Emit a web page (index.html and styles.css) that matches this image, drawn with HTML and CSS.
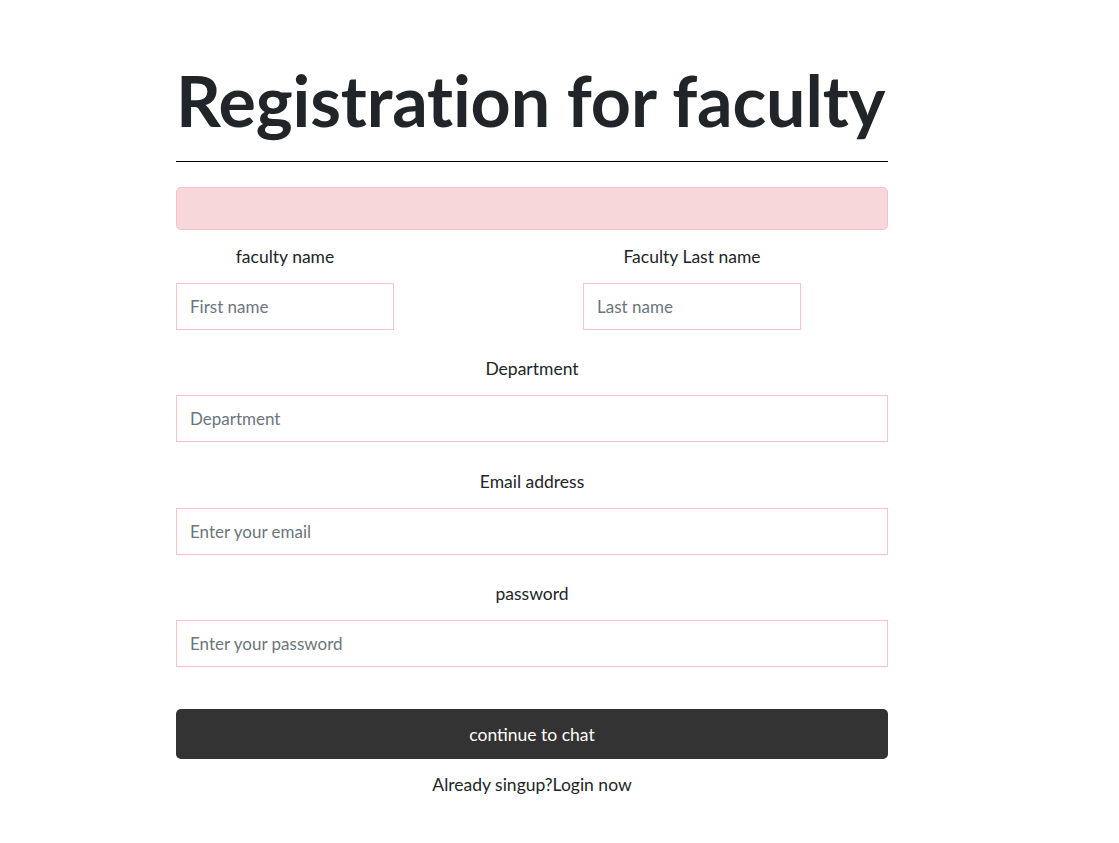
FILE: index.html
```html
<!DOCTYPE html>
<html lang="en">
<head>
<meta charset="utf-8">
<title>Registration for faculty</title>
<link rel="stylesheet" href="styles.css">
</head>
<body>
<main class="page">
  <h1 class="title">Registration for faculty</h1>
  <hr class="rule">
  <div class="alert"></div>
  <form class="form">
    <div class="name-row">
      <div class="field">
        <label class="label">faculty name</label>
        <input class="input" type="text" placeholder="First name">
      </div>
      <div class="field">
        <label class="label">Faculty Last name</label>
        <input class="input" type="text" placeholder="Last name">
      </div>
    </div>
    <div class="field group">
      <label class="label">Department</label>
      <input class="input" type="text" placeholder="Department">
    </div>
    <div class="field group group-email">
      <label class="label">Email address</label>
      <input class="input" type="email" placeholder="Enter your email">
    </div>
    <div class="field group">
      <label class="label">password</label>
      <input class="input" type="password" placeholder="Enter your password">
    </div>
    <button class="submit" type="button">continue to chat</button>
    <p class="login">Already singup?Login now</p>
  </form>
</main>
</body>
</html>
```

FILE: styles.css
```css
* { box-sizing: border-box; }
body {
  margin: 0;
  background: #fff;
  font-family: Lato, "Open Sans", sans-serif;
  color: #212529;
}
.page {
  width: 712px;
  margin-left: 176px;
  padding-top: 58px;
}
.title {
  margin: 0;
  font-size: 70px;
  line-height: 84px;
  font-weight: 700;
  color: #212529;
  letter-spacing: -0.15px;
  white-space: nowrap;
}
.rule {
  margin: 19px 0 0;
  border: 0;
  border-top: 1px solid #000;
}
.alert {
  margin-top: 25px;
  height: 43px;
  background: #f8d7da;
  border: 1px solid #f5c2c7;
  border-radius: 5px;
}
.form {
  display: flex;
  flex-direction: column;
}
.name-row {
  display: grid;
  grid-template-columns: 218px 218px;
  column-gap: 189px;
  margin-top: 15px;
}
.field {
  display: flex;
  flex-direction: column;
}
.group {
  margin-top: 27px;
}
.group-email {
  margin-top: 28px;
}
.label {
  text-align: center;
  font-size: 17.5px;
  line-height: 24px;
  color: #212529;
  margin-bottom: 14px;
}
.input {
  height: 47px;
  width: 100%;
  border: 1px solid #fbc2cb;
  border-radius: 0;
  padding: 0 13px;
  font-family: inherit;
  font-size: 17px;
  color: #212529;
  background: #fff;
  outline: none;
}
.input::placeholder { color: #6c757d; }
.submit {
  margin-top: 42px;
  height: 50px;
  width: 100%;
  background: #333;
  color: #fff;
  border: 0;
  border-radius: 5px;
  font-family: inherit;
  font-size: 17.5px;
}
.login {
  margin: 14px 0 0;
  text-align: center;
  font-size: 17.5px;
  line-height: 24px;
  color: #212529;
}
```
